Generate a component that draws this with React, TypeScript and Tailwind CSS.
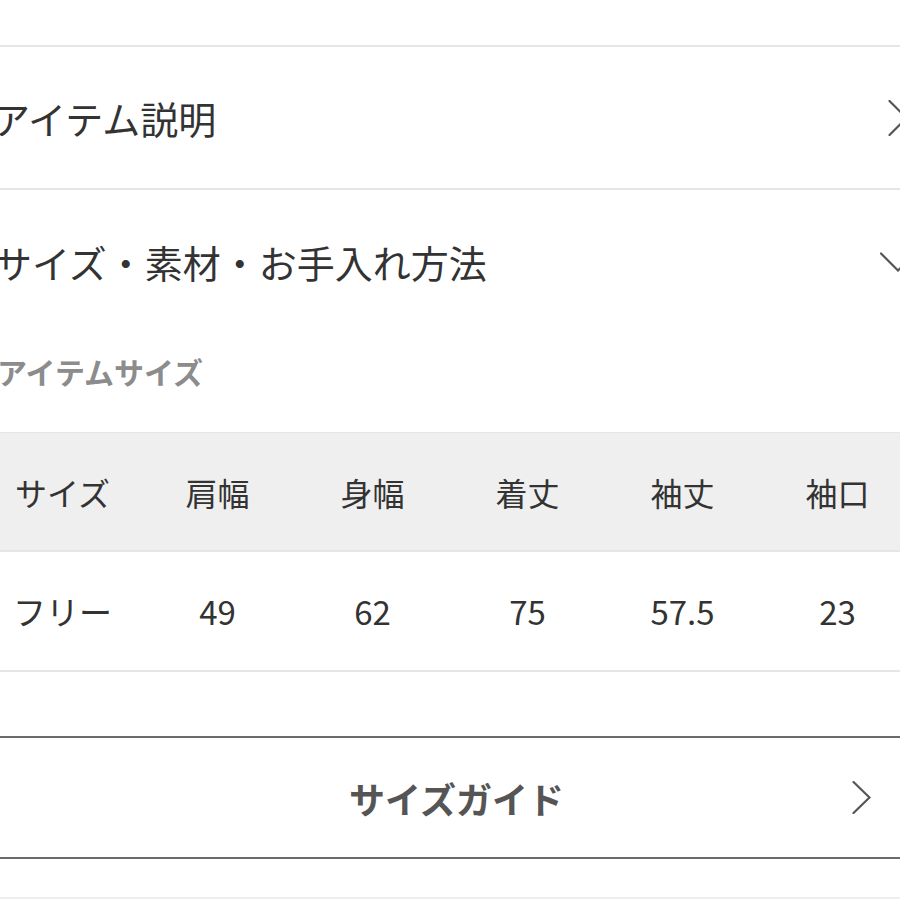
const font = { fontFamily: '"Noto Sans CJK JP", "Noto Sans", sans-serif' };

const headers = ["サイズ", "肩幅", "身幅", "着丈", "袖丈", "袖口"];
const values = ["フリー", "49", "62", "75", "57.5", "23"];

function Chevron({ dir, w, h }: { dir: "right" | "down"; w: number; h: number }) {
  const pts =
    dir === "right"
      ? `1.5,1 ${w - 1.5},${h / 2} 1.5,${h - 1}`
      : `1,1.5 ${w / 2},${h - 1.5} ${w - 1},1.5`;
  return (
    <svg width={w} height={h} viewBox={`0 0 ${w} ${h}`} className="shrink-0">
      <polyline
        points={pts}
        fill="none"
        stroke="#555"
        strokeWidth={2.2}
        strokeLinecap="round"
        strokeLinejoin="miter"
      />
    </svg>
  );
}

export default function App() {
  return (
    <div
      className="w-[900px] h-[900px] overflow-hidden bg-white text-[#333]"
      style={font}
    >
      <div className="h-[45px]" />
      {/* アイテム説明 */}
      <div className="flex items-center justify-between h-[145px] border-t-2 border-b-2 border-[#e6e6e6] -ml-[8px] -mr-[8px]">
        <span className="text-[38px] leading-none">アイテム説明</span>
        <Chevron dir="right" w={20} h={36} />
      </div>
      {/* サイズ・素材・お手入れ方法 */}
      <div className="flex items-center justify-between h-[144px] -ml-[6px] -mr-[16px]">
        <span className="text-[38px] leading-none">
          サイズ・素材・お手入れ方法
        </span>
        <Chevron dir="down" w={36} h={20} />
      </div>
      <div className="h-[98px] -ml-[3px] pt-[22px]">
        <span className="text-[30px] font-bold leading-none text-[#8c8c8c]">
          アイテムサイズ
        </span>
      </div>
      {/* table */}
      <div className="-ml-[15px] w-[930px]">
        <div className="grid grid-cols-6 h-[120px] bg-[#efefef] border-t border-b-2 border-[#e6e6e6]">
          {headers.map((h) => (
            <div
              key={h}
              className="flex items-center justify-center text-[32px] leading-none"
            >
              {h}
            </div>
          ))}
        </div>
        <div className="grid grid-cols-6 h-[120px] border-b-2 border-[#e6e6e6]">
          {values.map((v) => (
            <div
              key={v}
              className="flex items-center justify-center text-[33px] leading-none"
            >
              {v}
            </div>
          ))}
        </div>
      </div>
      <div className="h-[64px]" />
      {/* サイズガイド */}
      <div className="flex items-center h-[123px] border-t-2 border-b-2 border-[#6a6a6a] -mx-[10px]">
        <div className="flex-1" />
        <span className="text-[36px] font-bold leading-none text-[#555] ml-[52px]">
          サイズガイド
        </span>
        <div className="flex-1 flex justify-end pr-[39px]">
          <Chevron dir="right" w={19} h={33} />
        </div>
      </div>
      <div className="h-[40px] border-b-2 border-[#eeeeee]" />
    </div>
  );
}
